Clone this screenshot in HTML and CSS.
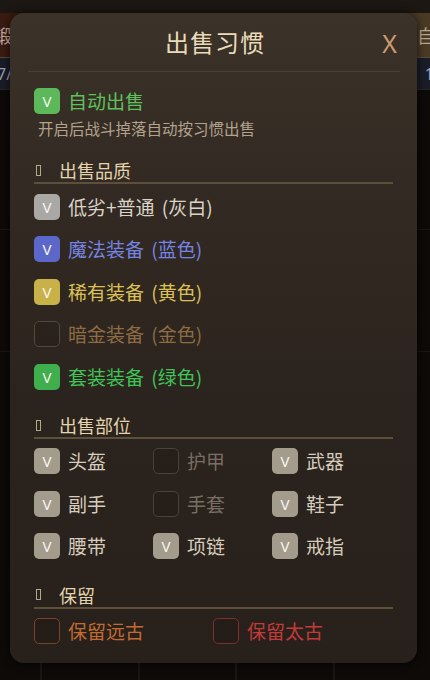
FILE: index.html
```html
<!DOCTYPE html>
<html lang="zh-CN">
<head>
<meta charset="utf-8">
<title>出售习惯</title>
<link rel="stylesheet" href="styles.css">
</head>
<body>
<div class="backdrop">
  <div class="bar-top"></div>
  <div class="bar-tabs">
    <div class="tab tab-red"><span class="tab-text">锻</span></div>
    <div class="tab tab-gold"><span class="tab-text">自</span></div>
  </div>
  <div class="bar-info"><span class="info-l">7/</span><span class="info-r">1</span></div>
  <div class="bg-band band-1"></div>
  <div class="bg-band band-2"></div>
  <div class="bg-fill"></div>
  <div class="bg-cells"><div class="cell"></div><div class="cell"></div><div class="cell"></div><div class="cell"></div></div>
</div>

<div class="modal">
  <div class="modal-header">
    <div class="modal-title">出售习惯</div>
    <div class="modal-close">X</div>
  </div>

  <div class="modal-body">
    <div class="row auto-row">
      <span class="box box-green-light">V</span>
      <span class="label c-green-light">自动出售</span>
    </div>
    <div class="hint">开启后战斗掉落自动按习惯出售</div>

    <div class="section first">
      <span class="tofu"></span><span class="section-title">出售品质</span>
    </div>
    <div class="list">
      <div class="row"><span class="box box-gray">V</span><span class="label c-gray">低劣+普通 (灰白)</span></div>
      <div class="row"><span class="box box-blue">V</span><span class="label c-blue">魔法装备 (蓝色)</span></div>
      <div class="row"><span class="box box-yellow">V</span><span class="label c-yellow">稀有装备 (黄色)</span></div>
      <div class="row"><span class="box box-off box-off-gold"></span><span class="label c-darkgold">暗金装备 (金色)</span></div>
      <div class="row"><span class="box box-green">V</span><span class="label c-green">套装装备 (绿色)</span></div>
    </div>

    <div class="section">
      <span class="tofu"></span><span class="section-title">出售部位</span>
    </div>
    <div class="grid3">
      <div class="row"><span class="box box-tan">V</span><span class="label c-tan">头盔</span></div>
      <div class="row"><span class="box box-off"></span><span class="label c-dim">护甲</span></div>
      <div class="row"><span class="box box-tan">V</span><span class="label c-tan">武器</span></div>
      <div class="row"><span class="box box-tan">V</span><span class="label c-tan">副手</span></div>
      <div class="row"><span class="box box-off"></span><span class="label c-dim">手套</span></div>
      <div class="row"><span class="box box-tan">V</span><span class="label c-tan">鞋子</span></div>
      <div class="row"><span class="box box-tan">V</span><span class="label c-tan">腰带</span></div>
      <div class="row"><span class="box box-tan">V</span><span class="label c-tan">项链</span></div>
      <div class="row"><span class="box box-tan">V</span><span class="label c-tan">戒指</span></div>
    </div>

    <div class="section">
      <span class="tofu"></span><span class="section-title">保留</span>
    </div>
    <div class="grid2">
      <div class="row"><span class="box box-off box-off-orange"></span><span class="label c-orange">保留远古</span></div>
      <div class="row"><span class="box box-off box-off-red"></span><span class="label c-red">保留太古</span></div>
    </div>
  </div>
</div>
</body>
</html>
```

FILE: styles.css
```css
* { box-sizing: border-box; }

html, body {
  margin: 0;
  padding: 0;
}

body {
  width: 430px;
  height: 680px;
  overflow: hidden;
  position: relative;
  background: #0d0a08;
  font-family: "Noto Sans CJK SC", "Noto Sans", sans-serif;
}

/* ---------- backdrop ---------- */
.backdrop {
  display: flex;
  flex-direction: column;
  height: 680px;
}

.bar-top {
  height: 13px;
  background: #1c1713;
}

.bar-tabs {
  height: 45px;
  display: flex;
  justify-content: space-between;
  border-bottom: 1px solid #5a4a3a;
}

.tab {
  display: flex;
  align-items: center;
  font-size: 18px;
}

.tab-red {
  width: 40px;
  background: #3a1b11;
  color: #c9aaa0;
}

.tab-red .tab-text { margin-left: -6px; }

.tab-gold {
  width: 60px;
  background: #4a3a25;
  color: #bba88f;
  padding-left: 47px;
}

.bar-info {
  height: 32px;
  background: #1a1c27;
  display: flex;
  justify-content: space-between;
  align-items: center;
  font-family: "Noto Sans", sans-serif;
  font-size: 16px;
  color: #9aa0b8;
  border-bottom: 1px solid #2a2622;
}

.info-l { margin-left: -3px; }
.info-r { margin-right: -4px; }

.bg-band {
  border-bottom: 1px solid #1b1613;
}

.band-1 { height: 140px; }
.band-2 { height: 122px; }

.bg-fill { flex: 1; }

.bg-cells {
  height: 24px;
  display: flex;
  padding-left: 40px;
}

.cell {
  width: 116px;
  border-left: 2px solid #1c1612;
}

/* ---------- modal ---------- */
.modal {
  position: absolute;
  left: 10px;
  top: 13px;
  width: 407px;
  height: 650px;
  border-radius: 14px;
  background: linear-gradient(180deg, #3b3229 0%, #332a23 25%, #2b231d 60%, #28201a 100%);
  box-shadow: 0 0 10px rgba(0, 0, 0, 0.7);
}

.modal-header {
  position: relative;
  height: 59px;
  margin: 0 17px 0 18px;
  border-bottom: 1.5px solid #4b4034;
  display: flex;
  align-items: center;
  justify-content: center;
}

.modal-title {
  font-size: 24px;
  color: #eadbb8;
  letter-spacing: 1px;
  margin-top: -2px;
  margin-left: 2px;
}

.modal-close {
  position: absolute;
  right: 3px;
  top: 13px;
  font-family: "Noto Sans", sans-serif;
  font-weight: 400;
  font-size: 25px;
  color: #cc9a6c;
}

.modal-body {
  padding: 0 24px;
}

.row {
  display: flex;
  align-items: center;
  height: 42.5px;
}

.auto-row {
  height: 26px;
  margin-top: 16px;
}

.box {
  flex: none;
  width: 26px;
  height: 26px;
  border-radius: 5px;
  display: flex;
  align-items: center;
  justify-content: center;
  font-family: "Noto Sans", sans-serif;
  font-size: 15px;
  color: #f8f5ee;
  margin-right: 8px;
}

.label {
  font-size: 19px;
  line-height: 26px;
  white-space: nowrap;
  word-spacing: 3px;
}

.hint {
  margin-top: 3px;
  margin-left: 4px;
  font-size: 15.5px;
  line-height: 22px;
  color: #b3a38d;
}

.section {
  display: flex;
  align-items: center;
  height: 25px;
  margin-top: 16px;
  padding-left: 2px;
  padding-bottom: 1px;
  border-bottom: 2px solid #5e4f3a;
}

.section.first { margin-top: 20px; }

.tofu {
  display: inline-block;
  width: 5px;
  height: 11px;
  border: 1px solid #b6a78a;
  margin-right: 18px;
}

.section-title {
  font-size: 18px;
  color: #e3d4ae;
  line-height: 22px;
}

.list { margin-top: 1.5px; }

.grid3 {
  margin-top: 1px;
  display: grid;
  grid-template-columns: 119px 119px 119px;
}

.grid2 {
  margin-top: 1px;
  display: grid;
  grid-template-columns: 179px 179px;
}

/* checkbox colours */
.box-green-light { background: #5cb85a; }
.box-gray { background: #aaa8a5; }
.box-blue { background: #5b68c9; }
.box-yellow { background: #c9b14a; }
.box-green { background: #3fae4d; }
.box-tan { background: #a39b8b; }

.box-off {
  background: rgba(0, 0, 0, 0.08);
  border: 1.5px solid #4b4137;
}

.box-off-gold { border-color: #55463a; }
.box-off-orange { border-color: #7a4329; }
.box-off-red { border-color: #7c2f2e; }

/* label colours */
.c-green-light { color: #5ec25c; }
.c-gray { color: #dcd4c9; }
.c-blue { color: #7584e2; }
.c-yellow { color: #dcc254; }
.c-darkgold { color: #8d6c44; }
.c-green { color: #3fc557; }
.c-tan { color: #d6ccbc; }
.c-dim { color: #786e63; }
.c-orange { color: #c36a33; }
.c-red { color: #c33a3a; }
```
